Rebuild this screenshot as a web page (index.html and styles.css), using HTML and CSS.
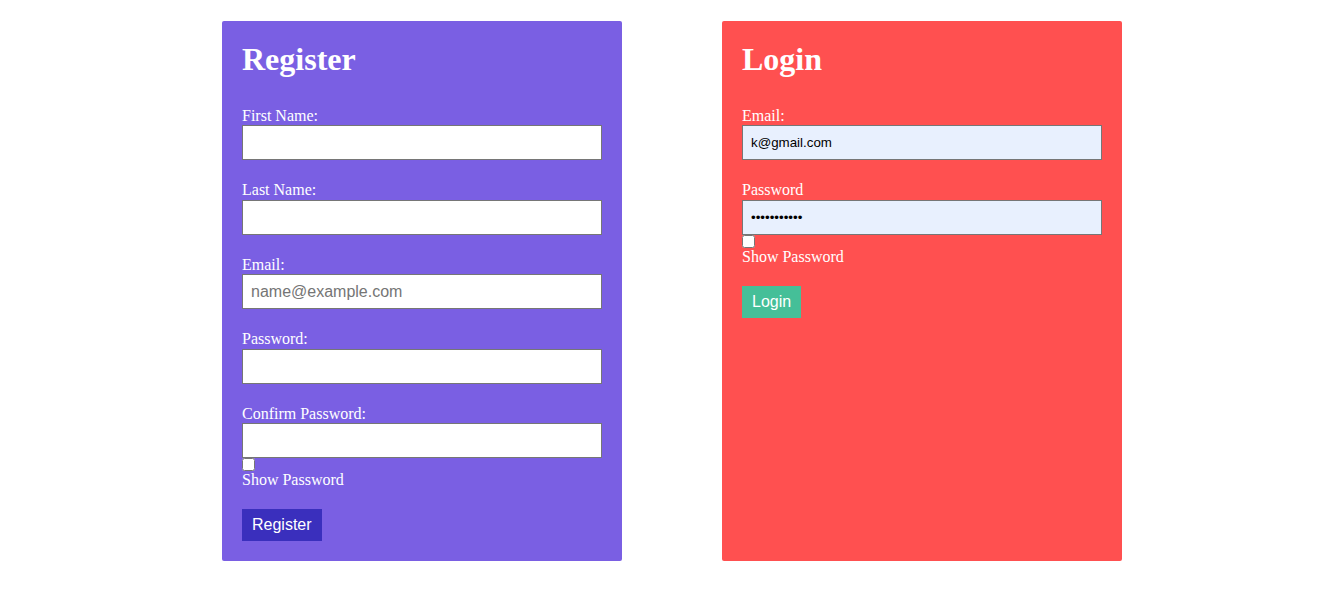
FILE: index.html
```html
<!DOCTYPE html>
<html>
<head>
<meta charset="utf-8">
<link rel="stylesheet" href="styles.css">
</head>
<body>
<div class="wrap">
  <form class="card card-register">
    <h1 class="title">Register</h1>
    <div class="field">
      <label class="label">First Name:</label>
      <input class="input" type="text">
    </div>
    <div class="field">
      <label class="label">Last Name:</label>
      <input class="input" type="text">
    </div>
    <div class="field">
      <label class="label">Email:</label>
      <input class="input" type="email" placeholder="name@example.com">
    </div>
    <div class="field">
      <label class="label">Password:</label>
      <input class="input" type="password">
    </div>
    <div class="field field-last">
      <label class="label">Confirm Password:</label>
      <input class="input" type="password">
      <input class="check" type="checkbox">
      <label class="label">Show Password</label>
    </div>
    <button class="btn btn-register" type="button">Register</button>
  </form>

  <form class="card card-login">
    <h1 class="title">Login</h1>
    <div class="field">
      <label class="label">Email:</label>
      <input class="input input-auto" type="text" value="k@gmail.com">
    </div>
    <div class="field field-last">
      <label class="label">Password</label>
      <input class="input input-auto" type="password" value="12345678901">
      <input class="check" type="checkbox">
      <label class="label">Show Password</label>
    </div>
    <button class="btn btn-login" type="button">Login</button>
  </form>
</div>
</body>
</html>
```

FILE: styles.css
```css
* { box-sizing: border-box; }

html, body {
  margin: 0;
  padding: 0;
  background: #ffffff;
}

body {
  font-family: "Liberation Serif", "Times New Roman", serif;
  font-size: 16px;
  color: #ffffff;
}

.wrap {
  display: flex;
  align-items: stretch;
  gap: 100px;
  padding: 21px 0 0 222px;
}

.card {
  width: 400px;
  padding: 20px;
  border-radius: 2px;
  margin: 0;
}

.card-register { background: #7a5fe3; }
.card-login { background: #ff5050; }

.title {
  margin: 0 0 29px 0;
  font-size: 32px;
  font-weight: bold;
  line-height: 37px;
}

.field {
  margin-bottom: 21px;
}

.field-last {
  margin-bottom: 20px;
}

.label {
  display: block;
  line-height: 18.4px;
}

.input {
  display: block;
  width: 360px;
  height: 35px;
  margin: 0;
  padding: 0 8px;
  border: 1px solid #767676;
  border-radius: 0;
  background: #ffffff;
  font-family: "Liberation Sans", Arial, sans-serif;
  font-size: 16px;
  color: #000000;
  outline: none;
}

.input::placeholder {
  color: #757575;
}

.input-auto {
  background: #e8f0fe;
  font-size: 13.33px;
}

.check {
  display: block;
  width: 13px;
  height: 13px;
  margin: 0;
  accent-color: #ffffff;
}

.btn {
  display: block;
  border: none;
  padding: 7px 10px;
  font-family: "Liberation Sans", Arial, sans-serif;
  font-size: 16px;
  line-height: 18px;
  color: #ffffff;
  cursor: pointer;
}

.btn-register { background: #3a2fbd; }
.btn-login { background: #45bf98; }
```
